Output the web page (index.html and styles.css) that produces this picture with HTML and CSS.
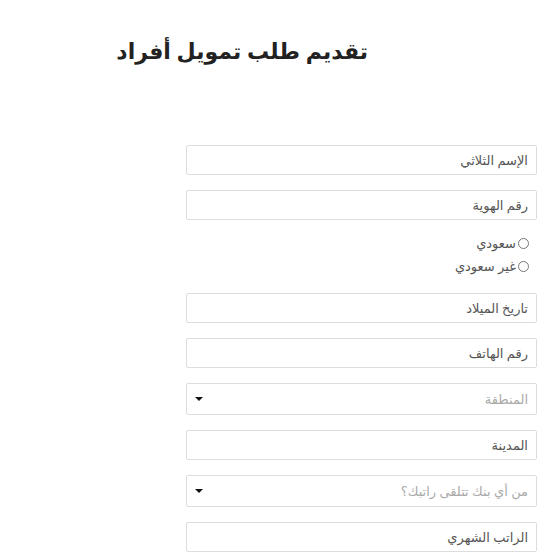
FILE: index.html
```html
<!DOCTYPE html>
<html lang="ar" dir="rtl">
<head>
    <meta charset="UTF-8">
    <meta name="viewport" content="width=device-width, initial-scale=1.0">
    <title>تقديم طلب تمويل أفراد</title>
    <link rel="stylesheet" href="styles.css">
</head>
<body>
    <div class="page">
        <div class="head">
            <h1>تقديم طلب تمويل أفراد</h1>
        </div>
        <form class="form">
            <input type="text" class="field" placeholder="الإسم الثلاثي">
            <input type="text" class="field" placeholder="رقم الهوية">
            <div class="radios">
                <label><input type="radio" name="nation" value="sa"> سعودي</label>
                <label><input type="radio" name="nation" value="other"> غير سعودي</label>
            </div>
            <input type="text" class="field" placeholder="تاريخ الميلاد">
            <input type="text" class="field" placeholder="رقم الهاتف">
            <div class="field select">
                <span>المنطقة</span>
                <span class="caret"></span>
            </div>
            <input type="text" class="field" placeholder="المدينة">
            <div class="field select">
                <span>من أي بنك تتلقى راتبك؟</span>
                <span class="caret"></span>
            </div>
            <input type="text" class="field" placeholder="الراتب الشهري">
        </form>
    </div>
</body>
</html>
```

FILE: styles.css
```css
body {
    margin: 0;
    background-color: white;
    font-family: "Noto Sans", "DejaVu Sans", sans-serif;
    color: #555;
}
.page {
    display: flex;
    flex-direction: column;
    width: 554px;
}
.head {
    padding-right: 186px;
    padding-top: 34px;
    height: 145px;
    box-sizing: border-box;
}
.head>h1 {
    margin: 0;
    font-size: 22px;
    font-weight: bold;
    color: #222;
    line-height: 32px;
}
.form {
    display: flex;
    flex-direction: column;
    gap: 15px;
    margin-right: 17px;
    width: 351px;
}
.field {
    height: 30px;
    width: 100%;
    box-sizing: border-box;
    border: 1px solid #ddd;
    border-radius: 2px;
    padding: 0 8px;
    font-family: inherit;
    font-size: 13px;
    color: #555;
    outline: none;
    background-color: white;
    margin: 0;
}
.field::placeholder {
    color: #555;
}
.select {
    display: flex;
    flex-direction: row;
    justify-content: space-between;
    align-items: center;
    height: 32px;
    color: #aaa;
}
.caret {
    width: 0;
    height: 0;
    border-left: 4px solid transparent;
    border-right: 4px solid transparent;
    border-top: 4px solid #111;
}
.radios {
    display: flex;
    flex-direction: column;
    gap: 7px;
    padding-right: 8px;
    margin-bottom: 4px;
    font-size: 13px;
}
.radios>label {
    display: flex;
    align-items: center;
    gap: 2px;
    height: 16px;
}
.radios input {
    margin: 0;
    width: 11px;
    height: 11px;
}
```
